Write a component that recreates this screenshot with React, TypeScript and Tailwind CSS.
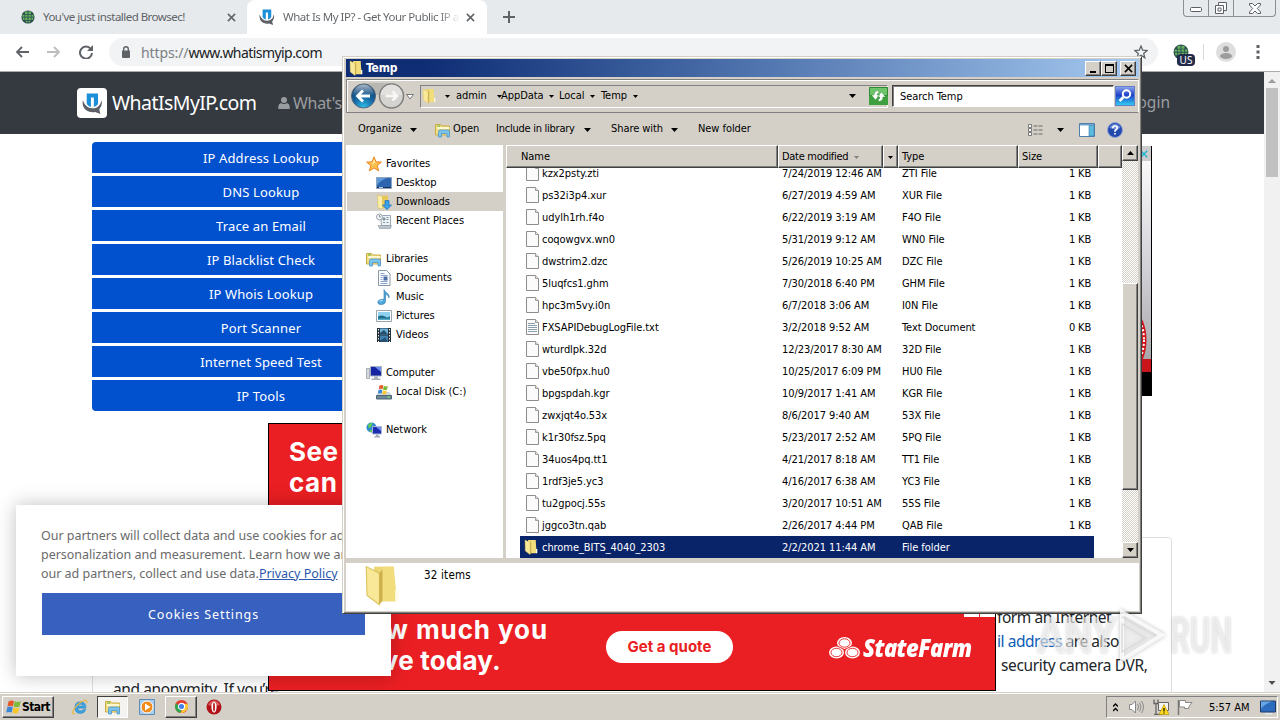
import type { ReactNode } from 'react';

interface FileEntry {
  name: string;
  date: string;
  type: string;
  size: string;
  icon?: 'file' | 'text' | 'folder';
}

const files: FileEntry[] = [
  { name: 'kzx2psty.zti', date: '7/24/2019 12:46 AM', type: 'ZTI File', size: '1 KB' },
  { name: 'ps32i3p4.xur', date: '6/27/2019 4:59 AM', type: 'XUR File', size: '1 KB' },
  { name: 'udylh1rh.f4o', date: '6/22/2019 3:19 AM', type: 'F4O File', size: '1 KB' },
  { name: 'coqowgvx.wn0', date: '5/31/2019 9:12 AM', type: 'WN0 File', size: '1 KB' },
  { name: 'dwstrim2.dzc', date: '5/26/2019 10:25 AM', type: 'DZC File', size: '1 KB' },
  { name: '5luqfcs1.ghm', date: '7/30/2018 6:40 PM', type: 'GHM File', size: '1 KB' },
  { name: 'hpc3m5vy.i0n', date: '6/7/2018 3:06 AM', type: 'I0N File', size: '1 KB' },
  { name: 'FXSAPIDebugLogFile.txt', date: '3/2/2018 9:52 AM', type: 'Text Document', size: '0 KB', icon: 'text' },
  { name: 'wturdlpk.32d', date: '12/23/2017 8:30 AM', type: '32D File', size: '1 KB' },
  { name: 'vbe50fpx.hu0', date: '10/25/2017 6:09 PM', type: 'HU0 File', size: '1 KB' },
  { name: 'bpgspdah.kgr', date: '10/9/2017 1:41 AM', type: 'KGR File', size: '1 KB' },
  { name: 'zwxjqt4o.53x', date: '8/6/2017 9:40 AM', type: '53X File', size: '1 KB' },
  { name: 'k1r30fsz.5pq', date: '5/23/2017 2:52 AM', type: '5PQ File', size: '1 KB' },
  { name: '34uos4pq.tt1', date: '4/21/2017 8:18 AM', type: 'TT1 File', size: '1 KB' },
  { name: '1rdf3je5.yc3', date: '4/16/2017 6:38 AM', type: 'YC3 File', size: '1 KB' },
  { name: 'tu2gpocj.55s', date: '3/20/2017 10:51 AM', type: '55S File', size: '1 KB' },
  { name: 'jggco3tn.qab', date: '2/26/2017 4:44 PM', type: 'QAB File', size: '1 KB' },
  { name: 'chrome_BITS_4040_2303', date: '2/2/2021 11:44 AM', type: 'File folder', size: '', icon: 'folder' },
];

const tools = [
  'IP Address Lookup',
  'DNS Lookup',
  'Trace an Email',
  'IP Blacklist Check',
  'IP Whois Lookup',
  'Port Scanner',
  'Internet Speed Test',
  'IP Tools',
];

/* ---------- icons ---------- */

function Folder({ className = 'w-4 h-4' }: { className?: string }) {
  return (
    <svg className={`${className} shrink-0`} viewBox="0 0 16 16">
      <path d="M5 1h7.500v13H5z" fill="#ecd671" />
      <path d="M8 1h4.500l.8 8.500v4.800H8z" fill="#f2dd7c" />
      <path d="M2 1l5 2.500v12L2.300 12z" fill="#f8e898" stroke="#dcc05a" strokeWidth=".4" />
      <path d="M7 3.500L8.200 2v12L7 15.500z" fill="#cdb04e" />
      <path d="M13 10h1.300v4.200H13z" fill="#fffbe6" />
    </svg>
  );
}

function FileIcon({ lines = false }: { lines?: boolean }) {
  return (
    <svg className="w-[14px] h-4" viewBox="0 0 14 16">
      <path d="M.5.5h9l3 3v12H.5z" fill="#fbfbfb" stroke="#8c8c8c" />
      <path d="M9.500.5v3h3" fill="#e8e8e8" stroke="#9c9c9c" />
      {lines && <path d="M2 4.500h7M2 6.500h9M2 8.500h9M2 10.500h9M2 12.500h9" stroke="#8aa0ad" />}
    </svg>
  );
}

function LibraryIcon() {
  return (
    <svg className="w-4 h-4 shrink-0" viewBox="0 0 16 16">
      <path d="M.5 2.500h5l1 1.500h8v9H.5z" fill="#f3df83" stroke="#c9ab46" />
      <path d="M2 5h12.500v2H2z" fill="#fff8cf" />
      <path d="M2 4h3" stroke="#54b33b" />
      <path d="M3.500 15V9.500q0-1.500 1.500-1.500h8q1.500 0 1.500 1.500V15H12v-3.500H6.500V15z" fill="#7cc3ec" stroke="#3f91c9" strokeWidth=".7" />
    </svg>
  );
}

function StarIcon() {
  return (
    <svg className="w-4 h-4" viewBox="0 0 16 16">
      <path d="M8 .8l2 5 5.400.3-4.200 3.500 1.500 5.300L8 12l-4.700 2.900 1.500-5.300L.6 6.100 6 5.800z" fill="#fdc04c" stroke="#e67e1b" strokeWidth=".9" />
      <path d="M8 3l1.300 3.600L6 9z" fill="#ffe7a3" />
    </svg>
  );
}

function DesktopIcon() {
  return (
    <svg className="w-4 h-4" viewBox="0 0 16 16">
      <path d="M.5 2.500h15v11H.5z" fill="#2c64ad" stroke="#8ca3bd" />
      <path d="M1 3h10Q5 5 1 10z" fill="#5f9bdb" />
      <path d="M1 12h14v1H1z" fill="#1b2f52" />
      <path d="M3 12.500h4" stroke="#b7c9de" />
    </svg>
  );
}

function DownloadsIcon() {
  return (
    <svg className="w-4 h-4" viewBox="0 0 16 16">
      <path d="M6 1.500h6v12.500H6z" fill="#e6c85b" />
      <path d="M1.500 1L6.500 2.500V15l-4.500-1z" fill="#fbefa9" stroke="#d3b548" strokeWidth=".5" />
      <path d="M9 6.500h4V11h2.500L11 15.700 6.500 11H9z" fill="#3aa1e6" stroke="#1d6fb5" strokeWidth=".7" />
    </svg>
  );
}

function RecentIcon() {
  return (
    <svg className="w-4 h-4" viewBox="0 0 16 16">
      <path d="M4.500 2.500h10v10h-9z" fill="#eef3f6" stroke="#9aa9b3" />
      <path d="M7 5h2v2H7zM10.500 4.500h2M10.500 6.500h2M7 9.500h2M10.500 9.500h2" fill="#8fa3b0" stroke="#7f93a2" />
      <path d="M2 12.500h13.500l-1 3H3.500z" fill="#b9c4cc" stroke="#8998a3" strokeWidth=".6" />
      <circle cx="3.500" cy="4" r="3" fill="#f4f6f7" stroke="#9ba6ae" />
      <path d="M3.500 2v2h1.500" fill="none" stroke="#6e7e8a" strokeWidth=".8" />
    </svg>
  );
}

function DocIcon() {
  return (
    <svg className="w-4 h-4" viewBox="0 0 16 16">
      <path d="M2.500.5h8l3.500 3.500v11.500H2.500z" fill="#fcfdfe" stroke="#8798a6" />
      <path d="M4.500 3.500h4M4.500 5.500h7M4.500 7.500h2M4.500 9.500h2M4.500 11.500h7M4.500 13.500h7" stroke="#8ba6c8" />
      <path d="M7.500 6.500h4v4h-4z" fill="#4d6fa8" />
    </svg>
  );
}

function MusicIcon() {
  return (
    <svg className="w-4 h-4" viewBox="0 0 16 16">
      <path d="M8 .5c.5 3 6 3.500 5 8.500-.4-2.500-2.500-3.500-3.500-3.700V12.500c0 1.800-1.800 3-4.500 3-2 0-3.500-1-3.200-2.600.3-1.700 3-2.900 6.200-2.500z" fill="#4fa8dc" stroke="#2a77ae" strokeWidth=".6" />
      <path d="M3.500 12.500q1-1.200 3-1" stroke="#c3e6fa" fill="none" />
    </svg>
  );
}

function PictureIcon() {
  return (
    <svg className="w-4 h-4" viewBox="0 0 16 16">
      <path d="M.5 2.500h15v11H.5z" fill="#fff" stroke="#9aa6af" />
      <path d="M2 4h12v8H2z" fill="#8fd0ee" />
      <path d="M2 8.500q4-2 7 0t5-.5v4H2z" fill="#1d6c8c" />
      <path d="M2 10.500h12V12H2z" fill="#54a9c4" />
    </svg>
  );
}

function VideoIcon() {
  return (
    <svg className="w-4 h-4" viewBox="0 0 16 16">
      <path d="M1 1h14v14H1z" fill="#23303a" />
      <path d="M4 1.500h8v6H4z" fill="#6bb1dc" />
      <path d="M4 8.500h8V15H4z" fill="#3e83b4" />
      <path d="M4 6l4-3 4 4.500H4zM4 13.500l5-3 3 4.500H4z" fill="#274f6d" />
      <path d="M2.500 2v13M13.500 2v13" stroke="#e8eef2" strokeDasharray="1.500 1.500" />
    </svg>
  );
}

function ComputerIcon() {
  return (
    <svg className="w-4 h-4" viewBox="0 0 16 16">
      <path d="M.5 3.500h3v10h-3z" fill="#d4d9de" stroke="#8a949d" strokeWidth=".7" />
      <path d="M4.500 1.500h11v9.500h-11z" fill="#1524a0" stroke="#a8b1c0" />
      <path d="M9 2h6v5z" fill="#6d8cf0" />
      <path d="M8 11.500h4v2H8zM5.500 13.500h9V15h-9z" fill="#aab3bd" />
    </svg>
  );
}

function DiskIcon() {
  return (
    <svg className="w-4 h-4" viewBox="0 0 16 16">
      <path d="M2.500 8h11l2.500 4H0z" fill="#cfd6dc" />
      <path d="M.5 11.500h15v3.500H.5z" fill="#6d8798" stroke="#4e6676" />
      <path d="M11.500 13h2.500" stroke="#7fe05b" strokeWidth="1.200" />
      <path d="M3.500 1.500q2.200-1.200 3.800 0l-.8 3.800Q4.500 4.300 2.700 5.300z" fill="#ea5b2b" />
      <path d="M7.800 1.800q2 1.200 4 0L11 5.600q-2 1-4 0z" fill="#79ba3a" />
      <path d="M2.500 6q2-1 3.900 0L5.600 9.600Q4 8.700 1.800 9.600z" fill="#3f87d9" />
      <path d="M6.900 6.300q1.900 1 3.900 0L10 10q-2 .8-3.800-.1z" fill="#fbc92f" />
    </svg>
  );
}

function NetworkIcon() {
  return (
    <svg className="w-4 h-4" viewBox="0 0 16 16">
      <circle cx="5.500" cy="5.500" r="5" fill="#2f86d2" />
      <path d="M2 2.500q3-2.500 5-1L5 5 2.500 6.500zM3 8l3 0 1 2-2 .5z" fill="#5dcb57" />
      <path d="M6.500 4.500h9v7.500h-9z" fill="#1b2cae" stroke="#aab6d6" />
      <path d="M10 5h5v4z" fill="#6f8df0" />
      <path d="M10 12.500h2.500v1.500H14v1.500H8.500V14H10z" fill="#9fa9b8" />
    </svg>
  );
}

function WindowsFlag({ className }: { className: string }) {
  return (
    <svg className={className} viewBox="0 0 16 16">
      <path d="M2.500 2.500Q5 .8 8 2L7 7.300Q4.500 6.200 1.500 7.500z" fill="#e8572a" />
      <path d="M8.700 2.300q3 1.500 6 0l-1.200 5.300q-3 1.400-5.800 0z" fill="#7dbb3c" />
      <path d="M1.300 8.300Q4 7 6.800 8.200L5.700 13.500Q3.200 12.300.2 13.600z" fill="#3d86d8" />
      <path d="M7.500 8.500q2.900 1.300 5.800 0L12 13.800q-2.700 1.400-5.700 0z" fill="#fbc52c" />
    </svg>
  );
}

function SiteLogo({ className }: { className: string }) {
  return (
    <svg className={className} viewBox="0 0 20 20">
      <path d="M.8 7q-1 6.500 3.200 9.500 4 2.500 8.500 1.500l5 2-1-4.500q3.500-4 2-8.500-.5 4.500-4 6.500-5 2.500-9.500-.5-3-2-4.200-6z" fill="#5b6167" />
      <path d="M4.500.5h10.800v9.500q-1.300 3-4 3V4.300H8.500V13q-2.700 0-4-3z" fill="#1b8fd8" />
    </svg>
  );
}

function Globe({ className }: { className: string }) {
  return (
    <svg className={className} viewBox="0 0 16 16">
      <circle cx="8" cy="8" r="7.500" fill="#2d4a4f" />
      <path d="M4.500 1.800h3v2.900h-3zM8.500 1.800h3v2.900h-3zM1.600 5.500h2.400v2.200H1.600zM4.800 5.500h2.700v2.200H4.800zM8.500 5.500h2.700v2.200H8.500zM12 5.500h2.400v2.200H12zM4.800 8.700h2.700v2.600H4.800zM8.500 8.700h2.700v2.600H8.500zM1.800 8.700H4v2.600H2.400zM12 8.700h2.200l-.5 2.600H12zM5 12.300h2.500v2H6zM8.500 12.300H11l-1 2H8.500z" fill="#62b35e" />
    </svg>
  );
}

function Caret({ className = 'w-[7px] h-1' }: { className?: string }) {
  return (
    <svg className={`${className} shrink-0`} viewBox="0 0 7 4">
      <path d="M0 0h7L3.500 4z" fill="currentColor" />
    </svg>
  );
}

function Cross({ className }: { className: string }) {
  return (
    <svg className={className} viewBox="0 0 10 10">
      <path d="M1 1l8 8M9 1L1 9" stroke="currentColor" strokeWidth="1.700" />
    </svg>
  );
}

/* ---------- browser ---------- */

function TabStrip() {
  return (
    <div className="flex h-[34px] bg-[#e7eaed] text-[11.500px] text-[#5f6368]">
      <div className="flex w-[247px] items-center pl-[21px]">
        <Globe className="w-[14px] h-[14px]" />
        <span className="ml-2 w-[184px] tracking-[-0.530px] whitespace-nowrap">You've just installed Browsec!</span>
        <Cross className="w-[9px] h-[9px]" />
      </div>
      <div className="flex w-[240px] items-center rounded-t-lg bg-white pl-3">
        <SiteLogo className="w-4 h-4" />
        <span className="ml-2 w-[177px] overflow-hidden whitespace-nowrap bg-linear-to-r from-[#5f6368] from-88% to-transparent bg-clip-text tracking-[-0.500px] text-transparent">
          What Is My IP? - Get Your Public IP a
        </span>
        <Cross className="ml-[6px] w-[9px] h-[9px]" />
      </div>
      <div className="flex w-[44px] items-center justify-center">
        <svg className="w-3 h-3" viewBox="0 0 12 12">
          <path d="M6 0v12M0 6h12" stroke="#5f6368" strokeWidth="2" />
        </svg>
      </div>
      <div className="ml-auto mr-1 flex h-[17px] w-[93px] rounded-b border border-t-0 border-[#8b8f93]">
        <div className="flex w-[25px] items-center justify-center border-r border-[#8b8f93]">
          <svg className="mt-[3px] w-3 h-[5px]" viewBox="0 0 12 5">
            <rect x=".5" y=".5" width="11" height="4" rx="1" fill="#fff" stroke="#5c6066" />
          </svg>
        </div>
        <div className="flex w-[25px] items-center justify-center border-r border-[#8b8f93]">
          <svg className="w-3 h-3" viewBox="0 0 12 12">
            <path d="M3.500.5h8v8h-8z" fill="#fff" stroke="#5c6066" />
            <path d="M.5 3.500h8v8h-8zM3 6h3v3H3z" fill="#fff" stroke="#5c6066" />
          </svg>
        </div>
        <div className="flex flex-1 items-center justify-center">
          <svg className="w-3 h-[11px]" viewBox="0 0 12 11">
            <path d="M.5.5h3L6 3 8.500.5h3V2L8.300 5.500 11.500 9v1.500h-3L6 8l-2.500 2.500h-3V9L3.700 5.500.5 2z" fill="#fff" stroke="#5c6066" />
          </svg>
        </div>
      </div>
    </div>
  );
}

function Toolbar() {
  return (
    <div className="flex h-[38px] items-center border-b border-[#a9abad] bg-white pb-px">
      <svg className="ml-[15px] w-[14px] h-3" viewBox="0 0 14 12">
        <path d="M14 6H2M7 1L2 6l5 5" fill="none" stroke="#5f6368" strokeWidth="1.800" />
      </svg>
      <svg className="ml-[18px] w-[14px] h-3" viewBox="0 0 14 12">
        <path d="M0 6h12M7 1l5 5-5 5" fill="none" stroke="#bbbdbf" strokeWidth="1.800" />
      </svg>
      <svg className="ml-[18px] w-[14px] h-[14px]" viewBox="0 0 14 14">
        <path d="M11.800 4A6 6 0 1 0 13 8" fill="none" stroke="#5f6368" strokeWidth="2" />
        <path d="M14 0v6H8z" fill="#5f6368" />
      </svg>
      <div className="ml-4 flex h-7 w-[1049px] items-center rounded-full bg-[#f1f3f4] pl-3">
        <svg className="w-[10px] h-3" viewBox="0 0 10 12">
          <path d="M1 4.500h8V11a1 1 0 0 1-1 1H2a1 1 0 0 1-1-1z" fill="#5f6368" />
          <path d="M2.700 5V3a2.300 2.300 0 0 1 4.600 0v2" fill="none" stroke="#5f6368" strokeWidth="1.400" />
        </svg>
        <span className="ml-[10px] text-[14px] tracking-[-0.440px] text-[#202124]">
          <span className="tracking-[-0.1px] text-[#7a7f84]">https://</span>
          <span className="tracking-[-0.56px]">www.whatismyip.com</span>
        </span>
        <svg className="ml-auto mr-[10px] w-[14px] h-[14px]" viewBox="0 0 14 14">
          <path d="M7 1l1.700 4.200 4.500.3-3.500 2.900 1.100 4.400L7 10.300l-3.800 2.500 1.100-4.400L.8 5.500l4.500-.3z" fill="none" stroke="#5f6368" strokeWidth="1.300" />
        </svg>
      </div>
      <div className="relative ml-[15px] w-4 h-4">
        <Globe className="w-4 h-4" />
        <span className="absolute top-[10px] left-[4px] flex h-3 w-[18px] items-center justify-center rounded-sm bg-[#222b4a] text-[10px] leading-none text-white">
          US
        </span>
      </div>
      <div className="ml-[14px] h-4 w-px bg-[#d5d7d9]" />
      <svg className="ml-3 w-5 h-5" viewBox="0 0 20 20">
        <circle cx="10" cy="10" r="10" fill="#dedede" />
        <circle cx="10" cy="7" r="3" fill="#9d9d9d" />
        <ellipse cx="10" cy="14" rx="6" ry="3" fill="#9d9d9d" />
      </svg>
      <svg className="ml-5 w-[4px] h-[14px]" viewBox="0 0 4 14">
        <path d="M.5 0h3v3h-3zM.5 5.500h3v3h-3zM.5 11h3v3h-3z" fill="#5f6368" />
      </svg>
    </div>
  );
}

function StateFarm() {
  return (
    <div className="flex items-center text-white">
      <svg className="w-[31px] h-[22px]" viewBox="0 0 31 22">
        <g fill="#fff">
          <ellipse cx="15.500" cy="6" rx="7.500" ry="6" />
          <ellipse cx="7.500" cy="15.500" rx="7.500" ry="6" />
          <ellipse cx="23.500" cy="15.500" rx="7.500" ry="6" />
        </g>
        <g fill="none" stroke="#eb1f23" strokeWidth=".9">
          <ellipse cx="15.500" cy="6" rx="5.500" ry="4.200" />
          <ellipse cx="7.500" cy="15.500" rx="5.500" ry="4.200" />
          <ellipse cx="23.500" cy="15.500" rx="5.500" ry="4.200" />
          <path d="M9 9.500l6.500 3 6.500-3M15.500 12v9" />
        </g>
      </svg>
      <span className="ml-[3px] inline-block origin-left scale-x-[0.88] font-['Open_Sans','Noto_Sans',sans-serif] text-[25px] leading-none font-extrabold tracking-[-0.7px] italic">
        StateFarm
      </span>
    </div>
  );
}

function Watermark() {
  return (
    <div className="absolute top-[608px] left-[1037px] flex h-[56px] items-center font-['Roboto',sans-serif] text-[50px] leading-none font-bold text-white/60 [text-shadow:0_0_3px_rgba(0,0,0,0.22)]">
      <span className="inline-block w-[80px] origin-left scale-x-[0.82] tracking-[-1px]">ANY</span>
      <svg className="w-[50px] h-[54px] drop-shadow-[0_0_2px_rgba(0,0,0,0.3)]" viewBox="0 0 50 54">
        <path d="M5 3l40 23L5 51z" fill="#fff" fillOpacity=".45" stroke="#fff" strokeOpacity=".8" strokeWidth="4" />
        <path d="M5 8l34 19M5 15l24 14L5 43z" fill="none" stroke="#dcdcdc" strokeWidth="1.500" />
      </svg>
      <span className="ml-[3px] inline-block origin-left scale-x-[0.62]">RUN</span>
    </div>
  );
}

function WebPage() {
  return (
    <div className="relative h-[620px] w-[1264px] overflow-hidden bg-white">
      <div className="flex h-[62px] items-center bg-[#343a40] pl-[77px] text-[#9a9da0]">
        <div className="flex h-[30px] w-[30px] items-center justify-center rounded bg-white">
          <SiteLogo className="w-[21px] h-[21px]" />
        </div>
        <span className="ml-[5px] w-[166px] text-[19.500px] tracking-[-0.560px] text-white">WhatIsMyIP.com</span>
        <svg className="w-3 h-3" viewBox="0 0 12 12">
          <circle cx="6" cy="3" r="3" fill="#9a9da0" />
          <path d="M.3 12V9.500Q.5 6.500 3 6q3 2 6 0 2.500.5 2.700 3.500V12z" fill="#9a9da0" />
        </svg>
        <span className="ml-[3px] text-[16px] tracking-[-0.3px]">What's My IP</span>
        <span className="mr-[94px] ml-auto text-[15.500px]">Login</span>
      </div>

      <div className="mt-2 ml-[92px] flex w-[338px] flex-col gap-[3px] overflow-hidden rounded text-center text-[13px] leading-[33px] tracking-[0.14px] text-white">
        {tools.map((tool) => (
          <div key={tool} className="h-[31px] bg-[#0151cf]">
            {tool}
          </div>
        ))}
      </div>

      {/* side banner */}
      <div className="absolute top-[74px] left-[1000px] flex h-[250px] w-[152px] flex-col items-end border-r border-black bg-linear-to-b from-white via-[#d0d0d6] to-[#98989c]">
        <div className="flex h-[15px] w-[152px] items-center justify-end bg-[#cccccc] pr-[3px] text-[#1bb3d0]">
          <Cross className="w-2 h-2" />
        </div>
        <svg className="mt-auto w-[152px] h-[90px]" viewBox="0 0 152 90">
          <path d="M0 53h152v13H0z" fill="#c9151b" />
          <circle cx="98" cy="34" r="47" fill="none" stroke="#d21119" strokeWidth="5" />
          <circle cx="98" cy="34" r="47" fill="none" stroke="#fff" strokeWidth="2" strokeDasharray="2 2" />
          <path d="M0 66h152v24H0z" fill="#000" />
        </svg>
      </div>

      {/* article card */}
      <div className="absolute top-[465px] left-[92px] h-[300px] w-[1080px] rounded border border-[#dfdfdf] bg-white pt-[67px] text-[15.500px] leading-6 tracking-[-0.450px] text-[#212529]">
        <p className="ml-[904px]">form an Internet</p>
        <p className="ml-[904px]">
          <span className="text-[#0b5bb5]">il address</span> are also
        </p>
        <p className="ml-[908px] tracking-[-0.35px] whitespace-nowrap">security camera DVR,</p>
        <p className="ml-[20px] tracking-[-0.4px]">and anonymity. If you’re</p>
      </div>

      {/* anchored ad creatives */}
      <div className="absolute top-[351px] left-[268px] h-[250px] w-[728px] border border-black bg-[#ea1f23] pt-[12px] pl-5 font-['Inter',sans-serif] text-[26px] leading-[31px] font-bold tracking-[0.5px] text-white">
        See how
        <br />
        can save
      </div>
      <div className="absolute top-[520px] left-[268px] flex h-[99px] w-[728px] border border-t-0 border-black bg-[#ea1f23]">
        <div className="w-[337px] pt-[22px] pl-5 font-['Inter',sans-serif] text-[26px] leading-[31px] font-bold whitespace-nowrap text-white">
          <span className="-ml-4 inline-block w-[275px] text-right tracking-[0.9px]">See how much you</span>
          <br />
          <span className="-ml-4 inline-block w-[228px] text-right tracking-[0.2px]">can save today.</span>
        </div>
        <div className="mt-[39px] flex h-8 w-[127px] items-center justify-center rounded-full bg-white font-['Inter',sans-serif] text-[15px] font-bold text-[#ea1f23]">
          Get a quote
        </div>
        <div className="mt-[43px] ml-[96px]">
          <StateFarm />
        </div>
        <div className="absolute top-0 right-0 flex gap-px">
          <div className="h-[25px] w-[15px] bg-white" />
          <div className="h-[25px] w-[15px] bg-white" />
        </div>
      </div>

      {/* cookie notice */}
      <div className="absolute top-[433px] left-[16px] h-[171px] w-[375px] bg-white px-[25px] pt-[21px] text-[12.500px] leading-[19px] tracking-[-0.02px] text-[#6a6a6a] shadow-[0_0_18px_rgba(0,0,0,0.25)]">
        <p className="whitespace-nowrap">Our partners will collect data and use cookies for ads</p>
        <p className="whitespace-nowrap">personalization and measurement. Learn how we and</p>
        <p className="whitespace-nowrap">
          our ad partners, collect and use data.<span className="text-[#2a57ad] underline">Privacy Policy</span>
        </p>
        <div className="mt-[10px] ml-px flex h-[42px] w-[323px] items-center justify-center bg-[#3860be] text-[12.500px] tracking-[0.9px] text-white">
          Cookies Settings
        </div>
      </div>
    </div>
  );
}

function Browser() {
  return (
    <div className="flex h-[692px] flex-col font-['Noto_Sans','Open_Sans',sans-serif]">
      <TabStrip />
      <Toolbar />
      <div className="flex">
        <WebPage />
        <div className="flex h-[620px] w-4 flex-col items-center bg-[#f1f1f1]">
          <svg className="mt-[7px] w-2 h-1 text-[#9a9a9a]" viewBox="0 0 8 4">
            <path d="M4 0l4 4H0z" fill="currentColor" />
          </svg>
          <div className="mt-[5px] h-[89px] w-3 bg-[#c1c1c1]" />
          <div className="mt-auto mb-[7px] text-[#505050]">
            <Caret className="w-2 h-1" />
          </div>
        </div>
      </div>
    </div>
  );
}

/* ---------- explorer ---------- */

function ClassicButton({ className, children }: { className: string; children?: ReactNode }) {
  return (
    <div
      className={`${className} flex items-center justify-center border border-t-white border-r-[#404040] border-b-[#404040] border-l-white bg-[#d4d0c8] shadow-[inset_-1px_-1px_0_#808080]`}
    >
      {children}
    </div>
  );
}

function TitleBar() {
  return (
    <div className="flex h-[18px] items-center bg-linear-to-r from-[#0f2d75] from-10% to-[#a6caf0] pr-[3px] pl-[2px]">
      <Folder />
      <span className="ml-[2px] text-[12px] font-bold tracking-[-0.2px] text-white">Temp</span>
      <ClassicButton className="ml-auto h-[15px] w-4">
        <svg className="w-[9px] h-[9px]" viewBox="0 0 9 9">
          <path d="M1 7h6v2H1z" />
        </svg>
      </ClassicButton>
      <ClassicButton className="h-[15px] w-4">
        <svg className="w-[9px] h-[9px]" viewBox="0 0 9 9">
          <path d="M0 0h9v9H0zM1 2v6h7V2z" fillRule="evenodd" />
        </svg>
      </ClassicButton>
      <ClassicButton className="ml-[3px] h-[15px] w-4">
        <Cross className="w-[9px] h-[9px]" />
      </ClassicButton>
    </div>
  );
}

function AddressBar() {
  return (
    <div className="mt-[2px] flex h-[34px] items-center border border-t-[#808080] border-r-white border-b-[#808080] border-l-[#808080] shadow-[inset_1px_1px_0_#fff]">
      <svg className="ml-1 w-[66px] h-7 shrink-0" viewBox="0 0 66 28">
        <defs>
          <radialGradient id="back" cx=".5" cy="1" r=".9">
            <stop offset="0" stopColor="#2fc4ee" />
            <stop offset=".5" stopColor="#1768a5" />
            <stop offset="1" stopColor="#0d3c6c" />
          </radialGradient>
          <linearGradient id="gloss" x2="0" y2="1">
            <stop offset="0" stopColor="#fff" stopOpacity=".65" />
            <stop offset="1" stopColor="#fff" stopOpacity=".05" />
          </linearGradient>
        </defs>
        <path d="M12 1h28q10 0 14 12H12z" fill="#b9b7b2" />
        <circle cx="12.500" cy="14" r="12" fill="url(#back)" stroke="#54657a" />
        <path d="M2 13a10.500 10.500 0 0 1 21 0z" fill="url(#gloss)" />
        <path d="M19 14H7M12 8.500L6.500 14l5.500 5.500" fill="none" stroke="#fff" strokeWidth="2.800" />
        <circle cx="40.500" cy="14" r="12" fill="#d5d3cf" stroke="#7d7d7d" strokeWidth="1.400" />
        <path d="M30 13a10.500 10.500 0 0 1 21 0z" fill="#e2e1de" />
        <path d="M34.500 14H46M41.500 9.500L46 14l-4.500 4.500" fill="none" stroke="#f7f7f7" strokeWidth="2.500" />
        <path d="M55.500 12.500h7L59 17z" fill="#fff" stroke="#777" />
      </svg>
      <div className="ml-[3px] flex h-[23px] w-[468px] shrink-0 items-center border border-t-[#808080] border-r-white border-b-white border-l-[#808080]">
        <Folder />
        <Caret className="ml-[8px] w-[5px] h-[3px]" />
        <span className="ml-[6px] w-[41px]">admin</span>
        <Caret className="w-[5px] h-[3px]" />
        <span className="-ml-px w-[48px]">AppData</span>
        <Caret className="w-[5px] h-[3px]" />
        <span className="ml-[5px] w-[31px]">Local</span>
        <Caret className="w-[5px] h-[3px]" />
        <span className="ml-[6px] w-[32px]">Temp</span>
        <Caret className="w-[5px] h-[3px]" />
        <Caret className="mr-[13px] ml-auto w-[7px] h-1" />
        <svg className="-mr-px w-[19px] h-[18px]" viewBox="0 0 19 18">
          <path d="M0 0h19v18H0z" fill="#3d9f3d" />
          <path d="M.5.5h18v8H.5z" fill="#6ec46b" stroke="#2f8a33" />
          <path d="M9 3.500Q5 4 5 8H2.500L6.500 13l4-5H8q0-2 2-2.500zM10 14.500q4-.5 4-4.500h2.500L12.500 5 8.500 10H11q0 2-2 2.500z" fill="#fff" stroke="#2f8a33" strokeWidth=".4" />
        </svg>
      </div>
      <div className="ml-[4px] flex h-[22px] w-[222px] items-center border border-t-[#404040] border-r-white border-b-white border-l-[#404040] bg-white pt-[2px] pl-[7px] shadow-[inset_1px_1px_0_#808080]">
        Search Temp
      </div>
      <svg className="ml-px w-5 h-5" viewBox="0 0 20 20">
        <defs>
          <linearGradient id="find" x2="0" y2="1">
            <stop offset="0" stopColor="#8fa9ee" />
            <stop offset=".45" stopColor="#1f3fc6" />
            <stop offset="1" stopColor="#2fd2f2" />
          </linearGradient>
        </defs>
        <rect x=".5" y=".5" width="19" height="19" fill="url(#find)" stroke="#6380c9" />
        <circle cx="11.500" cy="8" r="3.700" fill="none" stroke="#fff" strokeWidth="2" />
        <path d="M8.500 11L4.500 15" stroke="#fff" strokeWidth="2.500" />
      </svg>
    </div>
  );
}

function CommandBar() {
  return (
    <div className="flex h-8 items-center pt-px pl-[12px]">
      <span className="w-[52px]">Organize</span>
      <Caret />
      <div className="ml-[18px]">
        <LibraryIcon />
      </div>
      <span className="ml-[2px] w-[43px]">Open</span>
      <span className="w-[88px] tracking-[-0.25px] whitespace-nowrap">Include in library</span>
      <Caret />
      <span className="ml-[20px] w-[60px] whitespace-nowrap">Share with</span>
      <Caret />
      <span className="ml-5">New folder</span>
      <svg className="ml-auto w-4 h-3" viewBox="0 0 16 12">
        <path d="M.5.5h3v3h-3zM.5 4.500h3v3h-3zM.5 8.500h3v3h-3z" fill="#fff" stroke="#777" />
        <path d="M5.500 2h10M5.500 6h10M5.500 10h10" stroke="#666" strokeDasharray="4 1" />
      </svg>
      <Caret className="ml-[13px] w-[7px] h-1" />
      <svg className="ml-[15px] w-4 h-[14px]" viewBox="0 0 16 14">
        <path d="M.5.5h15v13H.5z" fill="#fff" stroke="#4f7fa8" />
        <path d="M1 1h14v1.500H1z" fill="#6da3cd" />
        <path d="M10 2.500h5V13h-5z" fill="#5bbbe0" stroke="#3c7ea8" strokeWidth=".6" />
      </svg>
      <svg className="mr-4 ml-3 w-4 h-4" viewBox="0 0 16 16">
        <circle cx="8" cy="8" r="7.500" fill="#2449ad" stroke="#8fa6d8" />
        <path d="M2.500 6Q4 2 8 2t5.500 4Q8 8 2.500 6z" fill="#6f8fdc" />
        <path d="M5.700 6.200Q5.800 4 8 4t2.300 2Q10.300 7.200 8 8.500v1.200M8 11v1.600" fill="none" stroke="#fff" strokeWidth="1.700" />
      </svg>
    </div>
  );
}

function TreeRow({ icon, label, child, selected }: { icon: ReactNode; label: string; child?: boolean; selected?: boolean }) {
  return (
    <div className={`ml-px flex h-[19px] items-center ${child ? 'gap-1 pl-[29px]' : 'gap-1 pl-[19px]'} ${selected ? 'bg-[#d4d0c8]' : ''}`}>
      {icon}
      <span className="pt-[2px] whitespace-nowrap">{label}</span>
    </div>
  );
}

function NavPane() {
  return (
    <div className="flex w-[157px] shrink-0 flex-col gap-[19px] bg-white pt-[9px]">
      <div>
        <TreeRow icon={<StarIcon />} label="Favorites" />
        <TreeRow icon={<DesktopIcon />} label="Desktop" child />
        <TreeRow icon={<DownloadsIcon />} label="Downloads" child selected />
        <TreeRow icon={<RecentIcon />} label="Recent Places" child />
      </div>
      <div>
        <TreeRow icon={<LibraryIcon />} label="Libraries" />
        <TreeRow icon={<DocIcon />} label="Documents" child />
        <TreeRow icon={<MusicIcon />} label="Music" child />
        <TreeRow icon={<PictureIcon />} label="Pictures" child />
        <TreeRow icon={<VideoIcon />} label="Videos" child />
      </div>
      <div>
        <TreeRow icon={<ComputerIcon />} label="Computer" />
        <TreeRow icon={<DiskIcon />} label="Local Disk (C:)" child />
      </div>
      <TreeRow icon={<NetworkIcon />} label="Network" />
    </div>
  );
}

function HeaderCell({ className, children }: { className: string; children?: ReactNode }) {
  return (
    <div className={`${className} flex h-[23px] items-center border border-t-white border-r-[#404040] border-b-[#404040] border-l-white bg-[#d4d0c8] pt-[2px] shadow-[inset_-1px_-1px_0_#808080]`}>
      {children}
    </div>
  );
}

function FileList() {
  return (
    <div className="flex h-[413px] w-[616px] flex-col bg-white">
      <div className="flex h-[23px] shrink-0">
        <HeaderCell className="w-[272px] pl-[14px]">Name</HeaderCell>
        <HeaderCell className="w-[105px] pl-[3px]">
          <span className="w-[72px] tracking-[-0.3px] whitespace-nowrap">Date modified</span>
          <Caret className="w-[5px] h-[3px] text-[#808080]" />
        </HeaderCell>
        <HeaderCell className="w-[15px] justify-center">
          <Caret className="w-[5px] h-[3px]" />
        </HeaderCell>
        <HeaderCell className="w-[120px] pl-[3px]">Type</HeaderCell>
        <HeaderCell className="w-[80px] pl-[3px]">Size</HeaderCell>
        <HeaderCell className="w-[24px]" />
      </div>
      <div className="flex flex-1 flex-col justify-end overflow-hidden pr-[28px] pl-[14px]">
        {files.map((file) => (
          <div
            key={file.name}
            className={`flex h-[22px] shrink-0 items-center whitespace-nowrap ${file.icon === 'folder' ? 'bg-[#0a246a] text-white' : ''}`}
          >
            <div className="flex w-[22px] pl-[6px]">
              {file.icon === 'folder' ? <Folder className="-ml-[3px] w-4 h-4" /> : <FileIcon lines={file.icon === 'text'} />}
            </div>
            <span className="w-[240px] pt-[2px]">{file.name}</span>
            <span className="w-[120px] pt-[2px]">{file.date}</span>
            <span className="w-[120px] pt-[2px]">{file.type}</span>
            <span className="w-[69px] pt-[2px] text-right tracking-[-0.2px]">{file.size}</span>
          </div>
        ))}
      </div>
    </div>
  );
}

function ListScrollbar() {
  return (
    <div className="flex w-4 flex-col bg-[repeating-conic-gradient(#fff_0_25%,#d4d0c8_0_50%)] bg-size-[2px_2px]">
      <ClassicButton className="h-4 w-4">
        <svg className="w-[7px] h-1" viewBox="0 0 7 4">
          <path d="M3.500 0L7 4H0z" />
        </svg>
      </ClassicButton>
      <ClassicButton className="mt-[122px] h-[207px] w-4" />
      <ClassicButton className="mt-auto h-4 w-4">
        <Caret />
      </ClassicButton>
    </div>
  );
}

function Explorer() {
  return (
    <div className="absolute top-[56px] left-[342px] h-[558px] w-[800px] border border-t-[#d4d0c8] border-r-[#404040] border-b-[#404040] border-l-[#d4d0c8] bg-[#d4d0c8] pt-[2px] pr-[2px] pl-[3px] font-['DejaVu_Sans_Condensed','DejaVu_Sans',sans-serif] text-[11px] tracking-[-0.06px] text-black shadow-[inset_1px_1px_0_#fff,inset_-1px_-1px_0_#808080]">
      <TitleBar />
      <AddressBar />
      <CommandBar />
      <div className="flex h-[413px]">
        <NavPane />
        <div className="w-[3px] shrink-0 bg-[#d4d0c8]" />
        <FileList />
        <ListScrollbar />
      </div>
      <div className="mt-[5px] flex h-12 bg-white">
        <Folder className="mt-px ml-[15px] w-[42px] h-[42px]" />
        <span className="mt-[4px] ml-[21px] text-[11.500px] tracking-[0.2px]">32 items</span>
      </div>
    </div>
  );
}

/* ---------- taskbar ---------- */

function Taskbar() {
  return (
    <div className="flex h-7 items-center border-t border-[#d4d0c8] bg-[#d4d0c8] font-['DejaVu_Sans_Condensed','DejaVu_Sans',sans-serif] text-[11px] text-black shadow-[inset_0_1px_0_#fff]">
      <ClassicButton className="mt-px ml-[2px] h-[22px] w-[52px]">
        <WindowsFlag className="w-4 h-4 shrink-0" />
        <span className="text-[12px] font-bold tracking-[-0.550px]">Start</span>
      </ClassicButton>
      <svg className="ml-[18px] w-4 h-4" viewBox="0 0 16 16">
        <path d="M14 9.300H5.800q.3 2.500 3 2.500 1.700 0 2.300-1.200h2.700Q12.600 14.500 8.500 14.500 2.800 14.500 2.800 8.700 2.800 2.800 8.500 2.800q5.800 0 5.500 6.500zM5.900 7h5.300Q10.800 5.200 8.600 5.200 6.300 5.200 5.900 7z" fill="#3ba3e3" stroke="#2177b5" strokeWidth=".4" />
        <path d="M3 14.300Q-1 15.500 1.800 10.500 6 4 12 1.500q3.500-1 2.500 2.500" fill="none" stroke="#e9b63c" strokeWidth="1.200" />
      </svg>
      <div className="ml-[9px] flex h-[22px] w-[31px] items-center justify-center border border-t-[#404040] border-r-white border-b-white border-l-[#404040] bg-[#f4f3f0]">
        <LibraryIcon />
      </div>
      <svg className="ml-[11px] w-4 h-4" viewBox="0 0 16 16">
        <path d="M.5.5h15v15H.5z" fill="#a9cdea" stroke="#5d8db8" />
        <circle cx="8" cy="8" r="6" fill="#f28c1c" stroke="#fff" />
        <path d="M6 4.500l5.500 3.500L6 11.500z" fill="#fff" />
      </svg>
      <ClassicButton className="ml-[10px] h-[22px] w-[32px]">
        <svg className="w-[15px] h-[15px]" viewBox="0 0 16 16">
          <circle cx="8" cy="8" r="7" fill="#e33b2e" />
          <path d="M2 4.500L6.500 8 8.500 11 6.500 15Q2 14 1 8.500z" fill="#2da94f" />
          <path d="M8 5h6.500Q16 9 13 12.500 10 15.500 6.800 14.900L10.500 9z" fill="#fcc934" />
          <circle cx="8" cy="8" r="3.300" fill="#3f7de8" stroke="#fff" strokeWidth="1.200" />
        </svg>
      </ClassicButton>
      <svg className="ml-[9px] w-4 h-4" viewBox="0 0 16 16">
        <circle cx="8" cy="8" r="7.500" fill="#b01217" />
        <path d="M2 6Q4 1.500 8 1.500T14 6Q8 8 2 6z" fill="#d8595a" />
        <ellipse cx="8" cy="8" rx="2.600" ry="5.500" fill="#fff" />
        <ellipse cx="8" cy="8" rx="1" ry="4.500" fill="#c0272a" />
      </svg>

      <div className="mt-px mr-[2px] ml-auto flex h-[22px] w-[172px] items-center border border-t-[#808080] border-r-white border-b-white border-l-[#808080]">
        <svg className="ml-[6px] w-[5px] h-[9px]" viewBox="0 0 5 9">
          <path d="M0 3.500L2.500 1 5 3.500M0 8l2.500-2.500L5 8" fill="none" stroke="#000" strokeWidth="1.300" />
        </svg>
        <svg className="ml-[11px] w-4 h-4" viewBox="0 0 16 16">
          <path d="M.5 5.500H3L6.500 2v12L3 10.500H.5z" fill="#fff" stroke="#888" />
          <path d="M8.500 5q2 3 0 6M10.500 3.500q3 4.500 0 9M12.500 2q4 6 0 12" fill="none" stroke="#8a8a8a" />
        </svg>
        <svg className="ml-[8px] w-4 h-4" viewBox="0 0 16 16">
          <path d="M5.500 3.500h10v8h-10z" fill="#f3f3f3" stroke="#666" />
          <path d="M1 .5v4h4v-4M3 4.500v11M1 15.500h9" fill="none" stroke="#666" strokeWidth="1.300" />
          <path d="M11 5.500l5 10H6z" fill="#ffd91c" stroke="#b38d00" strokeWidth=".6" />
          <path d="M11 9v3.500M11 13.500v1" stroke="#000" strokeWidth="1.200" />
        </svg>
        <svg className="ml-[8px] w-4 h-4" viewBox="0 0 16 16">
          <path d="M1.500 1v15" stroke="#777" strokeWidth="1.500" />
          <path d="M2.500 1.500h6v2h6.500l-2.500 3-1 3h-4v-1.500h-5z" fill="#fff" stroke="#888" />
        </svg>
        <span className="ml-[16px] w-[46px] pt-[2px] text-[11px] tracking-[-0.04px] whitespace-nowrap">5:57 AM</span>
        <svg className="ml-[5px] w-4 h-4" viewBox="0 0 16 16">
          <path d="M.5 2h15v11H.5z" fill="#2c6bbd" stroke="#1c3a66" />
          <path d="M1 2.500h11Q4 5 1 10z" fill="#68a6e6" />
          <path d="M5 14h7v1.500H5z" fill="#dfe6ee" />
        </svg>
      </div>
    </div>
  );
}

export default function App() {
  return (
    <div className="relative h-[720px] w-[1280px] overflow-hidden bg-white">
      <Browser />
      <Explorer />
      <Taskbar />
      <Watermark />
    </div>
  );
}
